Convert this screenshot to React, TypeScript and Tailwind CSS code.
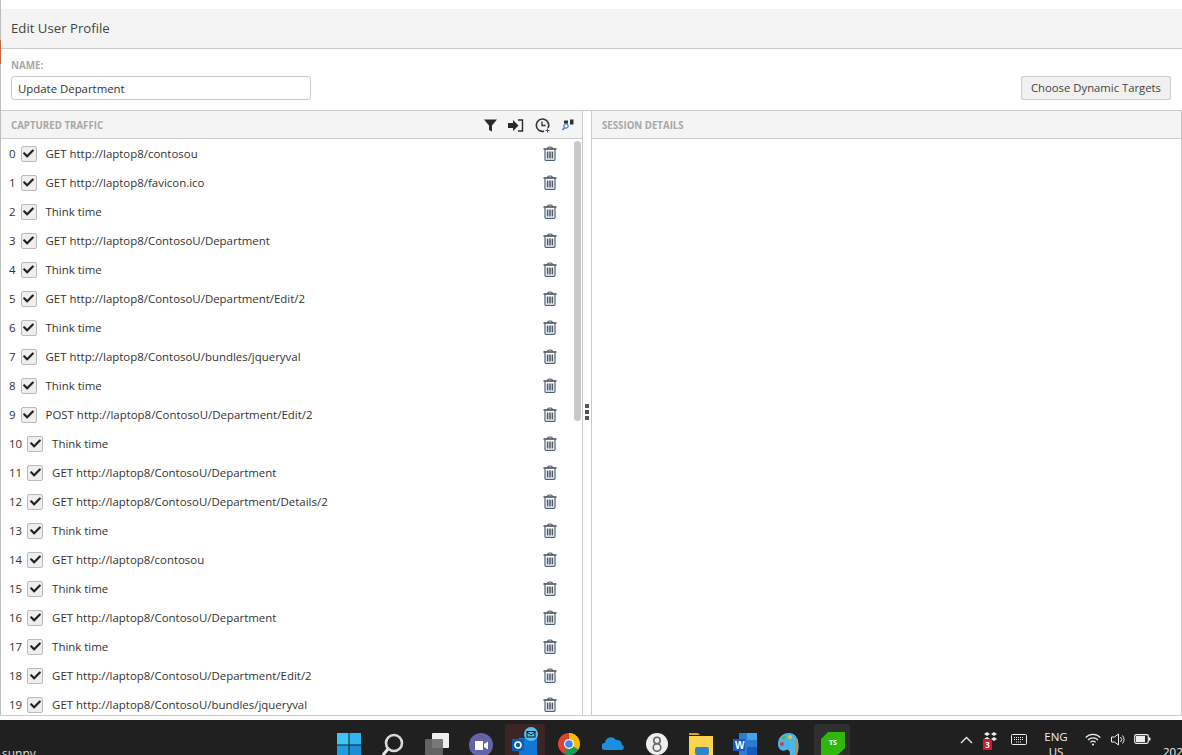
import { FaCheck } from "react-icons/fa";

const rows = [
  "GET http://laptop8/contosou",
  "GET http://laptop8/favicon.ico",
  "Think time",
  "GET http://laptop8/ContosoU/Department",
  "Think time",
  "GET http://laptop8/ContosoU/Department/Edit/2",
  "Think time",
  "GET http://laptop8/ContosoU/bundles/jqueryval",
  "Think time",
  "POST http://laptop8/ContosoU/Department/Edit/2",
  "Think time",
  "GET http://laptop8/ContosoU/Department",
  "GET http://laptop8/ContosoU/Department/Details/2",
  "Think time",
  "GET http://laptop8/contosou",
  "Think time",
  "GET http://laptop8/ContosoU/Department",
  "Think time",
  "GET http://laptop8/ContosoU/Department/Edit/2",
  "GET http://laptop8/ContosoU/bundles/jqueryval",
];

const Trash = () => (
  <svg width="14" height="15" viewBox="0 0 14 15" fill="none" className="shrink-0">
    <path d="M4.6 2.5 C4.6 .4 9.4 .4 9.4 2.5" stroke="#4b5563" strokeWidth="1.1" />
    <path d="M.5 3 H13.5" stroke="#33383f" strokeWidth="1.4" />
    <path d="M2 3.5 V13.6 Q2 14.4 3 14.4 H11 Q12 14.4 12 13.6 V3.5" stroke="#4a5f7c" strokeWidth="1.2" />
    <path d="M4.6 5.5 V12.6 M7 5.5 V12.6 M9.4 5.5 V12.6" stroke="#4f5a68" strokeWidth="1.6" />
  </svg>
);

const Row = ({ index, text }: { index: number; text: string }) => (
  <div className="h-[29px] flex items-center shrink-0">
    <span className="ml-[8px] pt-[1px] text-[11.45px] text-[#333]">{index}</span>
    <span className="ml-[5px] w-[16px] h-[16px] shrink-0 border border-[#bbb] rounded-[2px] bg-[#eeeeee] flex items-center justify-center">
      <FaCheck size={11} color="#222" />
    </span>
    <span className="ml-[9px] pt-[1px] text-[11.45px] text-[#333] whitespace-nowrap flex-1">{text}</span>
    <span className="mr-[25px] flex"><Trash /></span>
  </div>
);

const TaskIcon = ({ children }: { children: React.ReactNode }) => (
  <div className="w-[44px] h-[35px] shrink-0 flex justify-center pt-[13px]">{children}</div>
);

export default function App() {
  return (
    <div className="w-[1182px] h-[755px] overflow-hidden bg-white flex flex-col relative font-['Open_Sans','Noto_Sans',sans-serif] text-[#333]">
      <div className="absolute left-0 top-[40px] w-px h-[24px] bg-[#c8683a]" />
      <div className="flex-1 min-h-0 flex flex-col border-l border-[#bdbdbd] border-r-0">
        <div className="h-[9px] shrink-0" />
        <div className="h-[40px] shrink-0 bg-[#f4f4f4] border-b border-[#ccc] flex items-center pl-[10px] pt-[1px] text-[13.2px] text-[#444]">
          Edit User Profile
        </div>
        <div className="h-[62px] shrink-0 border-b border-[#ccc] flex items-end justify-between pl-[10px] pr-[11px] pb-[10px]">
          <div className="flex flex-col">
            <span className="text-[9.8px] font-bold text-[#a8a8a8] leading-[12px] mb-[4px]">NAME:</span>
            <div className="w-[300px] h-[24px] border border-[#ccc] rounded-[3px] flex items-center pl-[6px] pt-[1px] text-[11.4px] text-[#333]">
              Update Department
            </div>
          </div>
          <div className="w-[150px] h-[24px] border border-[#ccc] rounded-[2px] bg-[#f0f0f0] flex items-center justify-center pt-[1px] text-[11.3px] text-[#444]">
            Choose Dynamic Targets
          </div>
        </div>
        <div className="flex-1 min-h-0 flex">
          <div className="w-[582px] shrink-0 border-r border-[#ccc] flex flex-col min-h-0 relative">
            <div className="h-[28px] shrink-0 bg-[#f4f4f4] border-b border-[#ccc] flex items-center justify-between pl-[10px] pr-[8px]">
              <span className="pt-[3px] text-[9.7px] font-bold text-[#a8a8a8]">CAPTURED TRAFFIC</span>
              <div className="flex items-center gap-[11px] pt-[1px]">
                <svg width="13" height="13" viewBox="0 0 13 13"><path d="M0 .5 H13 L8 6.5 V12.5 L5 11 V6.5 Z" fill="#2a2a2a" /></svg>
                <svg width="16" height="13" viewBox="0 0 16 13" fill="none"><path d="M0 4 H5 V1 L10.5 6.5 L5 12 V9 H0 Z" fill="#2a2a2a" /><path d="M10 1 H14.5 V12 H10" stroke="#2a2a2a" strokeWidth="1.4" /></svg>
                <svg width="16" height="15" viewBox="0 0 16 15" fill="none"><path d="M13 10 A6.2 6.2 0 1 0 9 13.2" stroke="#333" strokeWidth="1.6" /><path d="M7 3.5 V7.5 H10.5" stroke="#333" strokeWidth="1.3" /><path d="M12.5 10.5 V14.5 M10.5 12.5 H14.5" stroke="#6b2fa0" strokeWidth="1" /></svg>
                <svg width="12" height="12" viewBox="0 0 12 12" fill="none"><circle cx="4" cy="7" r="2.2" stroke="#1d5fb5" strokeWidth="1" /><path d="M2.3 8.8 L.5 11" stroke="#1d5fb5" strokeWidth="1.2" /><rect x="2" y="1.5" width="4" height="3" fill="#333" /><rect x="8" y=".5" width="3.5" height="5" fill="#333" /></svg>
              </div>
            </div>
            <div className="flex-1 min-h-0 overflow-hidden flex flex-col">
              {rows.map((r, i) => (
                <Row key={i} index={i} text={r} />
              ))}
            </div>
            <div className="absolute right-[1px] top-[30px] w-[7px] h-[280px] rounded-full bg-[#c9c9c9]" />
          </div>
          <div className="w-[8px] shrink-0 flex flex-col items-center justify-center gap-[2px] pb-[2px]">
            <span className="w-[4px] h-[4px] bg-[#555]" />
            <span className="w-[4px] h-[4px] bg-[#555]" />
            <span className="w-[4px] h-[4px] bg-[#555]" />
          </div>
          <div className="flex-1 border-l border-[#ccc] border-r flex flex-col">
            <div className="h-[28px] shrink-0 bg-[#f4f4f4] border-b border-[#ccc] flex items-center pl-[10px]">
              <span className="pt-[3px] text-[9.7px] font-bold text-[#a8a8a8]">SESSION DETAILS</span>
            </div>
          </div>
        </div>
      </div>
      <div className="h-[5px] shrink-0 border-t border-[#ccc] bg-white" />
      <div className="h-[35px] shrink-0 bg-[#202020] flex relative overflow-hidden">
        <span className="absolute left-[2px] top-[25px] text-[12px] text-[#ddd]">sunny</span>
        <div className="ml-[327px] flex">
          <TaskIcon>
            <svg width="24" height="24" viewBox="0 0 24 24"><rect width="11.5" height="11.5" fill="#3cc5f5" /><rect x="12.5" width="11.5" height="11.5" fill="#2fb4ee" /><rect y="12.5" width="11.5" height="11.5" fill="#1e9de0" /><rect x="12.5" y="12.5" width="11.5" height="11.5" fill="#1a8fd8" /></svg>
          </TaskIcon>
          <TaskIcon>
            <svg width="24" height="24" viewBox="0 0 24 24" fill="none"><circle cx="13" cy="10" r="8" stroke="#d8d8d8" strokeWidth="2.6" /><path d="M7 16 L2 22" stroke="#e8e8e8" strokeWidth="3" /></svg>
          </TaskIcon>
          <TaskIcon>
            <svg width="24" height="24" viewBox="0 0 24 24"><rect x="7" y="0" width="17" height="15" rx="1" fill="#eeeeee" /><rect x="0" y="6" width="18" height="16" rx="1" fill="#6a6a6a" opacity=".9" /></svg>
          </TaskIcon>
          <TaskIcon>
            <svg width="24" height="24" viewBox="0 0 24 24"><circle cx="12" cy="12" r="12" fill="#6264a7" /><path d="M6 8 H14 V17 H6 Z M15 11 L19 8.5 V16.5 L15 14 Z" fill="#fff" /></svg>
          </TaskIcon>
          <div className="w-[44px] h-[35px] shrink-0 flex justify-center relative">
            <div className="absolute left-[2px] top-[4px] w-[40px] h-[31px] bg-[#3d2425] rounded-t-[3px]" />
            <svg width="28" height="31" viewBox="0 0 28 31" className="relative mt-[7px] ml-[2px]"><rect x="7" y="11" width="18" height="18" fill="#0f78d4" /><rect x="0" y="12" width="12" height="12" fill="#0a5fb0" /><circle cx="6" cy="18" r="3" fill="none" stroke="#fff" strokeWidth="1.6" /><circle cx="19" cy="7" r="7" fill="#55c1ee" /><rect x="15" y="4.5" width="8" height="5.5" fill="none" stroke="#111" strokeWidth="1" /><path d="M15 5 L19 8 L23 5" fill="none" stroke="#111" strokeWidth="1" /></svg>
          </div>
          <TaskIcon>
            <svg width="22" height="22" viewBox="0 0 22 22"><circle cx="11" cy="11" r="11" fill="#db4437" /><path d="M11 11 L20.5 16.5 A11 11 0 0 1 6 20.8 Z" fill="#0f9d58" /><path d="M11 0 A11 11 0 0 1 20.5 16.5 L11 11 Z" fill="#fbbc05" /><circle cx="11" cy="11" r="5" fill="#fff" /><circle cx="11" cy="11" r="3.8" fill="#4285f4" /></svg>
          </TaskIcon>
          <TaskIcon>
            <svg width="23" height="14" viewBox="0 0 23 14" className="mt-[3px]"><path d="M3 14 A3.5 3.5 0 0 1 3 7 A6 6 0 0 1 14 4 A5 5 0 0 1 20 9 A2.6 2.6 0 0 1 20 14 Z" fill="#1a8fe0" /></svg>
          </TaskIcon>
          <TaskIcon>
            <svg width="22" height="22" viewBox="0 0 22 22" fill="none"><circle cx="11" cy="11" r="11" fill="#eee" /><circle cx="11" cy="7.5" r="3.2" stroke="#666" strokeWidth="1.6" /><circle cx="11" cy="14.5" r="3.8" stroke="#666" strokeWidth="1.6" /></svg>
          </TaskIcon>
          <TaskIcon>
            <svg width="24" height="22" viewBox="0 0 24 22"><path d="M0 0 H9 L11 2 H0 Z" fill="#d9a520" /><rect y="3" width="24" height="19" fill="#fcd34d" /><rect x="6" y="14" width="14" height="8" rx="2" fill="#2a86c8" /></svg>
          </TaskIcon>
          <TaskIcon>
            <svg width="24" height="22" viewBox="0 0 24 22"><rect x="6" width="18" height="22" fill="#2b7cd3" /><rect x="14" y="0" width="10" height="7" fill="#41a5ee" /><rect x="14" y="14" width="10" height="8" fill="#185abd" /><rect y="6" width="12" height="12" fill="#185abd" /><text x="2" y="16" fontSize="10" fontWeight="700" fill="#fff" fontFamily="Liberation Sans">W</text></svg>
          </TaskIcon>
          <TaskIcon>
            <svg width="22" height="22" viewBox="0 0 22 22"><path d="M11 0 C3 0 0 6 0 11 C0 17 5 19 8 17 C10 16 12 17 12 22 H19 C22 16 22 0 11 0 Z" fill="#4ab5e8" /><circle cx="4" cy="11" r="2" fill="#d23f3f" /><circle cx="6" cy="5" r="2" fill="#5bb450" /><circle cx="12" cy="4" r="2" fill="#f2c037" /><path d="M17 6 H20 L19 22 H17.5 Z" fill="#c08a50" /></svg>
          </TaskIcon>
          <div className="w-[44px] h-[35px] shrink-0 flex justify-center relative">
            <div className="absolute left-[3px] top-[4px] w-[36px] h-[31px] bg-[#2f2f2f] rounded-t-[4px]" />
            <div className="relative mt-[12px] w-[24px] h-[23px] bg-[#2fb80a] [clip-path:polygon(30%_0,100%_0,100%_70%,70%_100%,0_100%,0_30%)] flex items-center justify-center text-[7px] font-bold text-white">TS</div>
          </div>
        </div>
        <div className="ml-[99px] flex text-white">
          <div className="w-[24px] flex justify-center pt-[16px]">
            <svg width="13" height="8" viewBox="0 0 13 8" fill="none"><path d="M1 7 L6.5 1.5 L12 7" stroke="#eee" strokeWidth="1.3" /></svg>
          </div>
          <div className="w-[24px] ml-[2px] flex justify-center pt-[12px] relative">
            <svg width="16" height="12" viewBox="0 0 16 12"><path d="M3 0 L6 2 L3 4 L0 2 Z M10 0 L13 2 L10 4 L7 2 Z M3 5 L6 7 L3 9 L0 7 Z M10 5 L13 7 L10 9 L7 7 Z" fill="#eee" /></svg>
            <span className="absolute left-[3px] top-[19px] w-[9px] h-[11px] bg-[#d11a2a] text-[8px] font-bold leading-[11px] text-center">3</span>
          </div>
          <div className="w-[30px] flex justify-center pt-[14px]">
            <svg width="16" height="11" viewBox="0 0 16 11" fill="none"><rect x=".5" y=".5" width="15" height="10" rx="1" stroke="#eee" /><path d="M3 3.5 H13 M3 5.5 H13 M5 8 H11" stroke="#eee" strokeDasharray="1 1" /></svg>
          </div>
          <div className="w-[44px] flex flex-col items-center text-[11.5px] leading-[15px] pt-[9px] text-[#eee]">
            <span>ENG</span>
            <span>US</span>
          </div>
          <div className="w-[30px] flex justify-center pt-[13px]">
            <svg width="16" height="13" viewBox="0 0 16 13" fill="none"><path d="M.7 4.5 A10 10 0 0 1 15.3 4.5 M3 7 A7 7 0 0 1 13 7 M5.3 9.3 A4 4 0 0 1 10.7 9.3" stroke="#eee" strokeWidth="1.1" /><circle cx="8" cy="11.5" r="1.1" fill="#eee" /></svg>
          </div>
          <div className="w-[20px] flex justify-center pt-[13px]">
            <svg width="15" height="13" viewBox="0 0 15 13" fill="none"><path d="M.5 4 H3.5 L7.5 1 V12 L3.5 9 H.5 Z" stroke="#eee" /><path d="M9.5 4 A3.5 3.5 0 0 1 9.5 9 M11.5 2.5 A6 6 0 0 1 11.5 10.5" stroke="#eee" /></svg>
          </div>
          <div className="w-[28px] flex justify-center pt-[14px]">
            <svg width="17" height="10" viewBox="0 0 17 10" fill="none"><rect x=".7" y=".7" width="13.6" height="8.6" rx="1.5" stroke="#eee" strokeWidth="1.2" /><rect x="2" y="2" width="9" height="6" fill="#eee" /><rect x="15" y="3.5" width="1.5" height="3" fill="#eee" /></svg>
          </div>
          <span className="ml-[7px] mt-[23px] text-[11.5px] text-[#eee]">202</span>
        </div>
      </div>
    </div>
  );
}
